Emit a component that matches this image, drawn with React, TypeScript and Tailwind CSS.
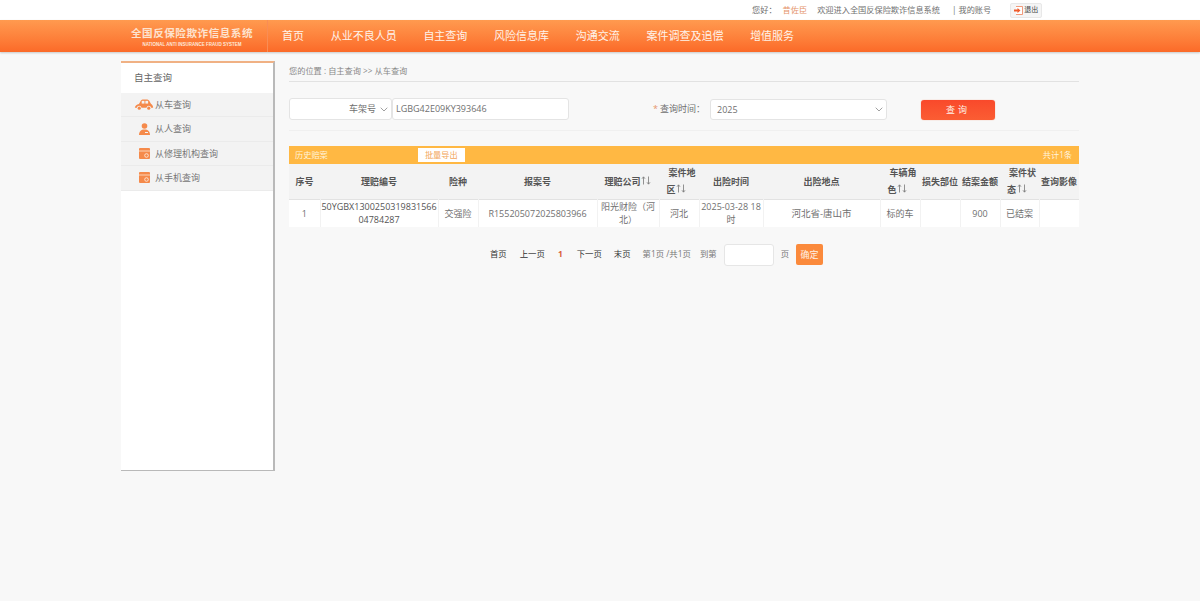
const cols = [31, 118, 40, 119, 62, 40, 64, 117, 40, 40, 40, 39, 40]

const sideItems = [
  { label: "从车查询", icon: "car" },
  { label: "从人查询", icon: "person" },
  { label: "从修理机构查询", icon: "calendar" },
  { label: "从手机查询", icon: "calendar" },
]

const navItems = ["首页", "从业不良人员", "自主查询", "风险信息库", "沟通交流", "案件调查及追偿", "增值服务"]

const headers = [
  { first: "序号" },
  { first: "理赔编号" },
  { first: "险种" },
  { first: "报案号" },
  { first: "理赔公司", sort: true },
  { first: "案件地", rest: "区", sort: true },
  { first: "出险时间" },
  { first: "出险地点" },
  { first: "车辆角", rest: "色", sort: true },
  { first: "损失部位" },
  { first: "结案金额" },
  { first: "案件状", rest: "态", sort: true },
  { first: "查询影像" },
]

const row = [
  "1",
  "50YGBX130025031983156604784287",
  "交强险",
  "R155205072025803966",
  "阳光财险（河北）",
  "河北",
  "2025-03-28 18时",
  "河北省-唐山市",
  "标的车",
  "",
  "900",
  "已结案",
  "",
]

function SideIcon({ type }: { type: string }) {
  if (type === "car") {
    return (
      <svg width="20" height="11" viewBox="0 0 20 12" className="text-[#f58a4b]">
        <path
          fill="currentColor"
          d="M0 9.500C.5 7 2 6 4.500 5.500L6.500 2C7 1 8 .5 9.500.5h3c1.500 0 2.500.5 3.200 1.500l2 3.500C19 6.200 20 7.500 20 9.500h-2.200a2.600 2.600 0 0 0-5.100 0H7.300a2.600 2.600 0 0 0-5.100 0z"
        />
        <rect x="7.500" y="2" width="3" height="3" fill="#f3f3f3" />
        <rect x="11.500" y="2" width="3" height="3" fill="#f3f3f3" />
        <circle cx="4.800" cy="10" r="1.700" fill="currentColor" />
        <circle cx="15.200" cy="10" r="1.700" fill="currentColor" />
      </svg>
    )
  }
  if (type === "person") {
    return (
      <svg width="11" height="12" viewBox="0 0 11 12" className="text-[#f58a4b]">
        <circle cx="5.500" cy="3" r="2.800" fill="currentColor" />
        <path fill="currentColor" d="M0 12c0-3.500 2-5.500 5.500-5.500S11 8.500 11 12z" />
        <rect x="6" y="9" width="3" height="1" fill="#f3f3f3" />
      </svg>
    )
  }
  return (
    <svg width="11" height="11" viewBox="0 0 11 11">
      <rect width="11" height="11" rx="1" fill="#f58a4b" />
      <rect y="2.500" width="11" height="1" fill="#fbd3b8" />
      <circle cx="7.500" cy="7.500" r="1.800" fill="none" stroke="#fde9da" strokeWidth="0.9" />
    </svg>
  )
}

function Chevron() {
  return (
    <svg width="8" height="5" viewBox="0 0 8 5" className="text-[#888]">
      <path d="M.7.7 4 4 7.300.7" fill="none" stroke="currentColor" strokeWidth="0.8" />
    </svg>
  )
}

function SortArrows() {
  return (
    <span className="inline-flex w-[11px] justify-center text-[#777]">
      <svg width="10" height="9" viewBox="0 0 10 9">
        <path d="M2.500 8.500V1M1 2.700 2.500 .8 4 2.700M7.500 .5V8M6 6.300 7.500 8.200 9 6.300" fill="none" stroke="currentColor" strokeWidth="0.8" />
      </svg>
    </span>
  )
}

export default function App() {
  return (
    <div className="h-[601px] w-[1200px] overflow-hidden bg-[#f8f8f8] font-['Open_Sans','Noto_Sans_CJK_SC',sans-serif] text-[9px] text-[#707070]">
      {/* top bar */}
      <div className="flex h-5 items-center bg-white pl-[752px] text-[8.200px]">
        <span>您好：</span>
        <span className="ml-[6px] text-[#e5946b]">昔佐臣</span>
        <span className="ml-[10px]">欢迎进入全国反保险欺诈信息系统</span>
        <span className="ml-[12px]">|</span>
        <span className="ml-[2px]">我的账号</span>
        <span className="ml-[19px] flex h-[15px] w-8 items-center justify-center gap-[1px] rounded-[2px] border border-[#e8e8e8] bg-[#f5f5f5] text-[7px] text-[#444]">
          <svg width="9" height="9" viewBox="0 0 9 9">
            <path d="M2 .5h6.500v8H2" fill="#fff" stroke="#f0825a" strokeWidth="0.8" />
            <path d="M0 3.500h3.500V2l3 2.500-3 2.500V5.500H0z" fill="#ef5b2b" />
          </svg>
          退出
        </span>
      </div>

      {/* nav */}
      <div className="flex h-8 items-center bg-gradient-to-b from-[#ff9a4f] to-[#fb6a28] shadow-[0_1px_2px_rgba(0,0,0,0.2)]">
        <div className="flex h-full w-[268px] flex-col items-center border-r border-[#f98d55] pl-[117px] pt-[7px]">
          <span className="text-[10.600px] font-bold leading-[13px] tracking-[0.5px] text-[#fde3cf]">
            全国反保险欺诈信息系统
          </span>
          <span className="mt-[2px] font-['Liberation_Sans',sans-serif] text-[4.500px] font-bold leading-[6px] text-[#fde9da]">
            NATIONAL ANTI INSURANCE FRAUD SYSTEM
          </span>
        </div>
        <div className="ml-[14px] flex gap-[26.700px] text-[11px] text-[#fff3ea]">
          {navItems.map((item) => (
            <span key={item}>{item}</span>
          ))}
        </div>
      </div>

      <div className="ml-[121px] flex pt-[9px]">
        {/* sidebar */}
        <div className="h-[410px] w-[154px] border-r-2 border-b border-t-2 border-r-[#b9b9b9] border-b-[#b9b9b9] border-t-[#f0b184] bg-white">
          <div className="flex h-[30px] items-center pl-[13px] text-[9.500px] text-[#666]">自主查询</div>
          {sideItems.map((item, idx) => (
            <div
              key={item.label}
              className="flex h-[24.400px] items-center border-b border-[#ebebeb] bg-[#f3f3f3]"
            >
              <span className="flex w-[34px] justify-end">
                <span className={idx === 0 ? "mr-[1px]" : "mr-[5px]"}>
                  <SideIcon type={item.icon} />
                </span>
              </span>
              <span className="text-[#777]">{item.label}</span>
            </div>
          ))}
        </div>

        {/* main */}
        <div className="ml-[14px] w-[790px]">
          <div className="h-[21px] border-b border-[#e2e2e2] pt-[4px] text-[8.200px] leading-[12px] text-[#888]">
            您的位置 : 自主查询 &gt;&gt; 从车查询
          </div>

          <div className="flex h-[49px] items-center border-b border-[#f0f0f0] pt-[6px]">
            <div className="flex h-[22px] w-[103px] items-center justify-end gap-[4px] rounded-[3px] border border-[#e4e4e4] bg-white pr-[3px]">
              车架号 <Chevron />
            </div>
            <div className="flex h-[22px] w-[177px] items-center rounded-[3px] border border-[#e4e4e4] bg-white pl-[3px]">
              LGBG42E09KY393646
            </div>
            <span className="ml-[84px] text-[#e5946b]">*</span>
            <span className="ml-[2px]">查询时间：</span>
            <div className="ml-[5px] mt-[1px] flex h-[21px] w-[177px] items-center justify-between rounded-[3px] border border-[#e4e4e4] bg-white pl-[6px] pr-[3px]">
              2025 <Chevron />
            </div>
            <div className="ml-[34px] mt-[1px] flex h-[20px] w-[74px] items-center justify-center rounded-[3px] bg-gradient-to-b from-[#f9492b] to-[#fb5d33] tracking-[3px] text-[#fff1e8] shadow-[0_0_1px_#f0825a]">
              查询
            </div>
          </div>

          <div className="mt-[15px] flex h-[18px] items-center justify-between bg-[#ffb843] pl-[6px] pr-[7px] text-[8.200px] text-[#fff3dd]">
            <div className="flex items-center">
              <span>历史赔案</span>
              <span className="ml-[90px] flex h-[14px] w-[47px] items-center justify-center bg-white text-[#f2a65c]">
                批量导出
              </span>
            </div>
            <span>共计1条</span>
          </div>

          <table className="w-[790px] table-fixed border-collapse">
            <colgroup>
              {cols.map((w, idx) => (
                <col key={idx} width={w} />
              ))}
            </colgroup>
            <thead>
              <tr className="h-[35px] border-b border-[#e2e2e2] bg-[#f3f3f3]">
                {headers.map((h) => (
                  <th key={h.first} className="p-0 text-center text-[9px] font-bold leading-[17px] text-[#555]">
                    {h.rest ? (
                      <span className="inline-block pl-[4px] text-left">
                        <span className="ml-[2px]">{h.first}</span>
                        <br />
                        {h.rest}
                        <SortArrows />
                      </span>
                    ) : (
                      <>
                        {h.first}
                        {h.sort && <SortArrows />}
                      </>
                    )}
                  </th>
                ))}
              </tr>
            </thead>
            <tbody>
              <tr className="h-[28px] bg-white">
                {row.map((c, idx) => (
                  <td
                    key={idx}
                    className={`break-all border-r border-[#f2f2f2] p-0 text-center leading-[13px] last:border-r-0 ${idx === 1 ? "text-[#555]" : ""} ${idx === 7 ? "text-[9.500px]" : ""}`}
                  >
                    {c}
                  </td>
                ))}
              </tr>
            </tbody>
          </table>

          {/* pagination */}
          <div className="mt-[17px] flex h-[21px] items-center pl-[201px] text-[8.400px] text-[#777]">
            <span className="text-[#333]">首页</span>
            <span className="ml-[13px] text-[#333]">上一页</span>
            <span className="ml-[13px] font-bold text-[#d9603a]">1</span>
            <span className="ml-[14px] text-[#333]">下一页</span>
            <span className="ml-[12px] text-[#333]">末页</span>
            <span className="ml-[12px]">第1页 /共1页</span>
            <span className="ml-[9px]">到第</span>
            <span className="ml-[7px] h-[22px] w-[50px] rounded-[3px] border border-[#e6e6e6] bg-white"></span>
            <span className="ml-[7px]">页</span>
            <span className="ml-[7px] flex h-[21px] w-[27px] items-center justify-center rounded-[2px] bg-[#fb8a3c] text-[9px] text-[#fff1e4]">
              确定
            </span>
          </div>
        </div>
      </div>
    </div>
  )
}
